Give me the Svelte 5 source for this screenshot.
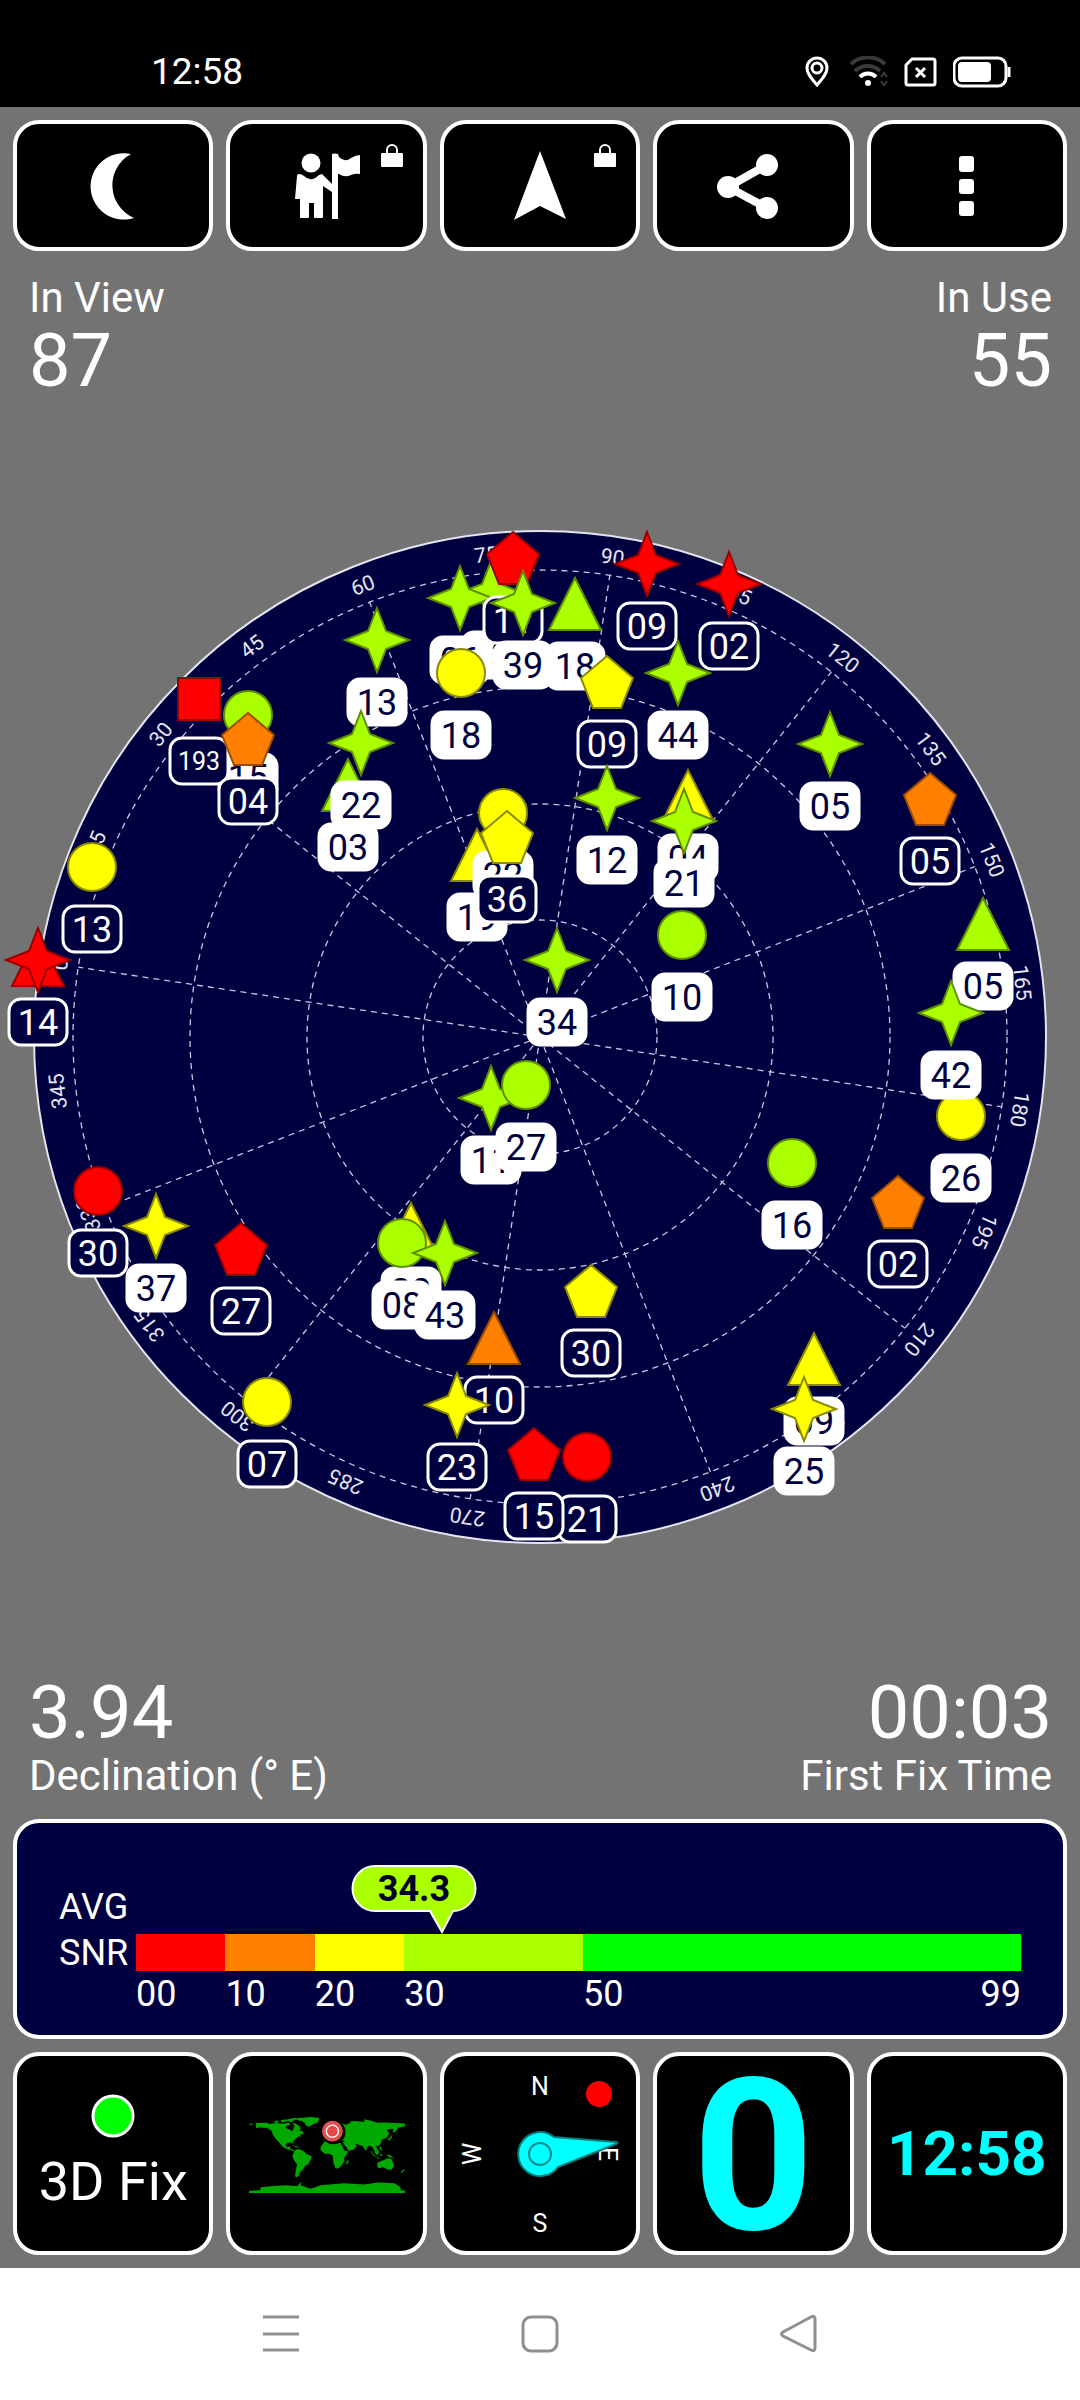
<script>
  const palette = {
    g: ['#aaff00', '#5f8f00'],
    y: ['#ffff00', '#8a8a00'],
    o: ['#ff8000', '#9a4d00'],
    r: ['#ff0000', '#990000']
  };

  const cx = 540;
  const cy = 1036;
  const dialRadius = 506;
  const horizonRadius = 467;
  const heading = 81.4;

  const rings = [117, 233, 350, horizonRadius];
  const spokes = Array.from({ length: 12 }, (_, i) => i * 30 - heading);
  const bearings = Array.from({ length: 24 }, (_, i) => i * 15);

  // kind, colour, x, y, id, used in the fix; later entries are drawn on top
  const satellites = [
    ['triangle', 'r', 38, 959, '', false],
    ['star', 'r', 38, 959, '14', false],
    ['circle', 'y', 92, 866, '13', false],
    ['circle', 'g', 248, 714, '15', true],
    ['square', 'r', 199, 698, '193', false],
    ['pentagon', 'o', 248, 738, '04', false],
    ['star', 'g', 377, 639, '13', true],
    ['triangle', 'g', 348, 784, '03', true],
    ['star', 'g', 361, 742, '22', true],
    ['star', 'g', 491, 592, '23', true],
    ['star', 'g', 460, 597, '06', true],
    ['pentagon', 'r', 513, 557, '11', false],
    ['star', 'g', 523, 602, '39', true],
    ['circle', 'y', 461, 672, '18', true],
    ['triangle', 'g', 575, 603, '18', true],
    ['pentagon', 'y', 607, 681, '09', false],
    ['star', 'r', 647, 563, '09', false],
    ['star', 'r', 729, 583, '02', false],
    ['star', 'g', 678, 672, '44', true],
    ['star', 'g', 607, 797, '12', true],
    ['triangle', 'y', 688, 795, '04', true],
    ['star', 'g', 684, 820, '21', true],
    ['star', 'g', 830, 743, '05', true],
    ['pentagon', 'o', 930, 798, '05', false],
    ['triangle', 'y', 477, 854, '19', true],
    ['circle', 'y', 503, 812, '22', true],
    ['pentagon', 'y', 507, 836, '36', false],
    ['circle', 'g', 682, 934, '10', true],
    ['star', 'g', 557, 959, '34', true],
    ['triangle', 'g', 983, 923, '05', true],
    ['circle', 'y', 961, 1115, '26', true],
    ['star', 'g', 951, 1012, '42', true],
    ['star', 'g', 491, 1097, '11', true],
    ['circle', 'g', 526, 1084, '27', true],
    ['circle', 'g', 792, 1162, '16', true],
    ['pentagon', 'o', 898, 1201, '02', false],
    ['circle', 'r', 98, 1190, '30', false],
    ['star', 'y', 156, 1225, '37', true],
    ['pentagon', 'r', 241, 1248, '27', false],
    ['triangle', 'y', 411, 1228, '20', true],
    ['circle', 'g', 402, 1242, '08', true],
    ['star', 'g', 445, 1252, '43', true],
    ['pentagon', 'y', 591, 1290, '30', false],
    ['triangle', 'o', 494, 1337, '10', false],
    ['star', 'y', 457, 1404, '23', false],
    ['circle', 'y', 267, 1401, '07', false],
    ['circle', 'r', 587, 1456, '21', false],
    ['pentagon', 'r', 534, 1453, '15', false],
    ['triangle', 'y', 814, 1358, '09', true],
    ['star', 'y', 804, 1408, '25', true]
  ].map(([kind, colour, x, y, id, used]) => ({ kind, colour, x, y, id, used }));

  const outlines = {
    star: '0,-32 9,-9 32,0 9,9 0,32 -9,9 -32,0 -9,-9',
    triangle: '0,-26 26,26 -26,26',
    pentagon: '0,-26 26,-4 14,26 -14,26 -26,-4',
    square: '-21,-21 21,-21 21,21 -21,21'
  };

  const segments = [
    { from: '00', share: 10, tone: 'red' },
    { from: '10', share: 10, tone: 'orange' },
    { from: '20', share: 10, tone: 'yellow' },
    { from: '30', share: 20, tone: 'lime' },
    { from: '50', share: 49, tone: 'green', to: '99' }
  ];
  const average = 34.3;
</script>

<header class="status">
  <span>12:58</span>
  <div class="status-icons">
    <svg width="24" height="32" viewBox="0 0 24 32" fill="none" stroke="#fff" stroke-width="3" aria-hidden="true">
      <path d="M12 29C7 23 2 18 2 12a10 10 0 0 1 20 0c0 6-5 11-10 17Z" />
      <circle cx="12" cy="12" r="5" />
    </svg>
    <svg width="43" height="32" viewBox="0 0 43 32" fill="none" stroke-width="4" aria-hidden="true">
      <path d="M6 8a25 25 0 0 1 34 0" stroke="#3a3a3a" />
      <path d="M10 15a18 18 0 0 1 25 0" stroke="#3a3a3a" />
      <path d="M15 21a11 11 0 0 1 16 0" stroke="#fff" />
      <circle cx="23" cy="27" r="3" fill="#fff" />
      <path d="M36 21l3-4 3 4M36 25l3 4 3-4" stroke="#3a3a3a" stroke-width="2" />
    </svg>
    <svg width="33" height="32" viewBox="0 0 33 32" fill="none" stroke="#fff" stroke-width="3" aria-hidden="true">
      <path d="M8 3h21q2 0 2 2v22q0 2-2 2H4q-2 0-2-2V9Z" stroke-linejoin="round" />
      <path d="M12 12l9 9M21 12l-9 9" />
    </svg>
    <svg width="58" height="32" viewBox="0 0 58 32" fill="none" aria-hidden="true">
      <rect x="1" y="2" width="52" height="28" rx="8" stroke="#fff" stroke-width="3" />
      <rect x="5" y="6" width="33" height="20" rx="4" fill="#fff" />
      <path d="M56 11v10" stroke="#fff" stroke-width="3" />
    </svg>
  </div>
</header>

<main>
  <nav class="tiles toolbar" aria-label="Tools">
    <button class="tile" aria-label="Night mode">
      <svg width="72" height="72" viewBox="0 0 72 72" fill="#fff"><path d="M54 4A33.2 33.2 0 1 0 57 68A35.6 35.6 0 0 1 54 4Z" /></svg>
    </button>
    <button class="tile" aria-label="Waypoints">
      <svg width="72" height="72" viewBox="0 0 72 72" fill="#fff">
        <circle cx="20" cy="13" r="9.5" />
        <path d="M8 24q3 0 5 2q7 7 15-1l3-1 10 10v8l-9-6V67q0 1-1 1h-7q-1 0-1-1V53h-5V67q0 1-1 1h-7q-1 0-1-1V49H4L6 26q0-2 2-2Z" />
        <path d="M41 4q3-1 6 0l1 3q6 6 12 1 5-3 9-3v19q-4-1-9 1-6 3-12-1l-1 0V69h-6Z" />
      </svg>
      {@render lock()}
    </button>
    <button class="tile" aria-label="Navigate">
      <svg width="72" height="72" viewBox="0 0 72 72" fill="#fff"><path d="M36 1 62 69 36 56 10 70Z" /></svg>
      {@render lock()}
    </button>
    <button class="tile" aria-label="Share">
      <svg width="72" height="72" viewBox="0 0 72 72" fill="#fff">
        <path d="M50 15 11 37 50 58" fill="none" stroke="#fff" stroke-width="8" />
        <circle cx="11" cy="37" r="11" /><circle cx="50" cy="15" r="11" /><circle cx="50" cy="58" r="11" />
      </svg>
    </button>
    <button class="tile" aria-label="More">
      <svg width="72" height="72" viewBox="0 0 72 72" fill="#fff">
        <rect x="28" y="6" width="15" height="16" rx="3" /><rect x="28" y="29" width="15" height="15" rx="3" /><rect x="28" y="51" width="15" height="15" rx="3" />
      </svg>
    </button>
  </nav>

  <section class="stats">
    <div><div class="name">In View</div><div class="value">87</div></div>
    <div class="end"><div class="name">In Use</div><div class="value">55</div></div>
  </section>

  <svg class="sky" viewBox="0 398 1080 1276" role="img" aria-label="Satellite positions">
    <circle {cx} {cy} r={dialRadius} fill="#000040" stroke="#e4e4f0" stroke-width="2" />
    <g class="grid">
      {#each rings as r}
        <circle {cx} {cy} {r} />
      {/each}
      {#each spokes as angle}
        <path d="M{cx} {cy}V{cy - horizonRadius}" transform="rotate({angle} {cx} {cy})" />
      {/each}
    </g>
    {#each bearings as bearing}
      <text class="bearing" x={cx} y={cy - 478} transform="rotate({bearing - heading} {cx} {cy})">{bearing}</text>
    {/each}
    {#each satellites as s}
      <g transform="translate({s.x} {s.y})">
        {#if s.kind === 'circle'}
          <circle r="24" fill={palette[s.colour][0]} stroke={palette[s.colour][1]} stroke-width="2" />
        {:else}
          <polygon points={outlines[s.kind]} fill={palette[s.colour][0]} stroke={palette[s.colour][1]} stroke-width="2" />
        {/if}
        {#if s.id}
          <rect class="plate" class:used={s.used} x="-29" y="39" width="58" height="46" rx="12" />
          <text class="id" class:used={s.used} class:small={s.id.length > 2} y={s.id.length > 2 ? 71 : 75}>{s.id}</text>
        {/if}
      </g>
    {/each}
  </svg>

  <section class="stats">
    <div><div class="value">3.94</div><div class="name">Declination (° E)</div></div>
    <div class="end"><div class="value">00:03</div><div class="name">First Fix Time</div></div>
  </section>

  <section class="snr">
    <div class="snr-name">AVG<br />SNR</div>
    <div class="gauge">
      <svg class="bubble" style="left: {(average / 99) * 100}%" width="126" height="69" viewBox="0 0 126 69">
        <path d="M24 1H102A22 22 0 0 1 102 46L91 67 79 46H24A22 22 0 0 1 24 1Z" fill="#aaff00" stroke="#fff" stroke-width="2" />
        <text x="63" y="36">{average}</text>
      </svg>
      {#each segments as s}
        <div class="segment" style="flex-grow: {s.share}">
          <div class="band {s.tone}"></div>
          <div class="ticks"><span>{s.from}</span>{#if s.to}<span>{s.to}</span>{/if}</div>
        </div>
      {/each}
    </div>
  </section>

  <section class="tiles gadgets">
    <button class="tile fix">
      <svg width="44" height="44" viewBox="0 0 44 44"><circle cx="22" cy="22" r="20" fill="#0f0" stroke="#fff" stroke-width="3" /></svg>
      <span>3D Fix</span>
    </button>
    <button class="tile" aria-label="World map">
      <svg width="156" height="78" viewBox="57 75 464 232" fill="#00a800">
        <path d="M57 101h12v3H57ZM78 99 110 98 118 102 140 99 160 101 176 98 180 104 168 108 166 114 178 118 184 124 190 118 188 110 194 112 190 104 186 99 196 100 206 108 210 116 206 120 214 122 220 130 208 134 212 138 202 140 194 148 188 154 188 162 184 157 170 158 166 164 170 172 178 168 180 176 190 180 194 184 186 182 170 176 158 170 148 158 136 146 128 134 124 122 112 114 90 112 78 114Z" />
        <path d="M130 94l10-3 8 4-12 4ZM150 91l16-3 6 5-16 4ZM168 89 190 84 204 83 192 90 182 97ZM184 164l16 4 8 5-12-3ZM204 84 240 81 266 84 262 98 248 102 236 110 228 108 222 98 212 92 196 90Z" />
        <path d="M192 182 200 176 212 178 222 184 226 190 244 198 240 208 234 220 224 226 218 236 208 246 206 254 200 260 194 258 196 240 200 222 190 208 186 198Z" />
        <path d="M282 154 300 150 308 156 330 158 336 172 342 182 352 182 346 194 340 202 340 212 332 226 322 234 314 234 308 216 306 196 296 190 282 190 270 180 270 170ZM346 216 354 206 352 218 346 222Z" />
        <path d="M278 150 280 140 292 138 300 128 292 120 310 104 330 98 344 104 360 98 356 94 374 93 400 96 400 88 420 92 440 98 460 97 520 100 522 108 500 113 494 124 484 127 486 116 466 119 474 130 464 144 452 148 448 162 440 168 434 166 440 180 432 184 424 170 414 166 408 172 404 182 396 168 386 164 372 160 378 168 366 178 354 182 344 168 336 156 342 152 330 150 322 150 318 142 300 144 292 150ZM470 148 478 140 484 132 480 146 470 152Z" />
        <path d="M414 178l8 8 12 13-6-2ZM430 184l12-6 2 10-8 6ZM430 199l16 4-2 3ZM448 188l7 8-7 1ZM464 193l14 2 10 9-14-4ZM446 166l6 10-1 7-5-8Z" />
        <path d="M438 224 440 216 454 210 464 206 474 204 480 206 486 218 488 228 480 238 466 236 456 230 442 234ZM521 235l-4 7-9 6 2-6Z" />
        <path d="M57 300 90 299 92 290 130 286 170 284 200 287 214 272 210 284 240 294 270 284 340 278 400 282 440 276 490 278 508 290 508 298 521 300 521 307 57 307Z" />
        <circle cx="308" cy="126" r="36" fill="#000" />
        <circle cx="305" cy="123" r="31" fill="#e05050" />
        <circle cx="305" cy="123" r="18" fill="#e84848" stroke="#fff" stroke-width="4" />
      </svg>
    </button>
    <button class="tile" aria-label="Compass">
      <svg class="compass" width="192" height="194" viewBox="-96 -97 192 194">
        <text y="-59">N</text>
        <text y="78">S</text>
        <text y="-59" transform="rotate(-90)">W</text>
        <text y="-59" transform="rotate(90)">E</text>
        <circle cx="59" cy="-60" r="13" fill="#f00" />
        <path d="M14-17 76-12Q79-11 76-10L18 13A22 22 0 1 1 14-17Z" fill="#0ff" stroke="#007c7c" stroke-width="2" />
        <circle r="11" fill="none" stroke="#008c8c" stroke-width="2" />
      </svg>
    </button>
    <button class="tile speed">0</button>
    <button class="tile clock">12:58</button>
  </section>
</main>

<nav class="system" aria-label="System">
  <button aria-label="Recent apps">
    <svg width="42" height="42" viewBox="0 0 42 42"><path d="M3 4h36M3 21h36M3 37h36" /></svg>
  </button>
  <button aria-label="Home">
    <svg width="42" height="42" viewBox="0 0 42 42"><rect x="4" y="4" width="34" height="34" rx="8" /></svg>
  </button>
  <button aria-label="Back">
    <svg width="42" height="42" viewBox="0 0 42 42"><path d="M33 4Q37 2 37 6V35Q37 39 33 37L5 23Q2 21 5 19Z" /></svg>
  </button>
</nav>

{#snippet lock()}
  <svg class="lock" width="22" height="24" viewBox="0 0 22 24" aria-hidden="true">
    <path d="M6 11V7a5 5 0 0 1 10 0v4" fill="none" stroke="#fff" stroke-width="2" />
    <rect y="10" width="22" height="14" rx="1" fill="#fff" />
  </svg>
{/snippet}

<style>
  :global(body) {
    margin: 0;
    background: #fff;
    color: #fff;
    font-family: Roboto, "Liberation Sans", sans-serif;
  }
  button {
    margin: 0;
    padding: 0;
    border: 0;
    background: none;
    color: inherit;
    font: inherit;
  }
  .status {
    box-sizing: border-box;
    height: 107px;
    padding: 37px 69px 0 151px;
    background: #000;
    display: flex;
    align-items: center;
    justify-content: space-between;
    font-size: 37px;
    line-height: 48px;
  }
  .status-icons {
    display: flex;
    gap: 16px;
  }
  main {
    padding: 13px 0;
    background: #737373;
  }
  .tiles {
    display: grid;
    grid-template-columns: repeat(5, 1fr);
    gap: 13px;
    margin: 0 13px;
  }
  .tile {
    position: relative;
    box-sizing: border-box;
    border: 4px solid #fff;
    border-radius: 26px;
    background: #000;
    display: flex;
    align-items: center;
    justify-content: center;
    min-width: 0;
  }
  .toolbar .tile {
    height: 131px;
  }
  .gadgets .tile {
    height: 203px;
  }
  .lock {
    position: absolute;
    top: 19px;
    right: 20px;
  }
  .stats {
    display: flex;
    justify-content: space-between;
    padding: 0 28px 0 29px;
  }
  .toolbar + .stats {
    padding-top: 22px;
  }
  .end {
    text-align: right;
  }
  .name {
    font-size: 42px;
    line-height: 50px;
  }
  .value {
    font-size: 74px;
    line-height: 76px;
  }
  .sky {
    display: block;
    width: 100%;
    height: auto;
  }
  .grid {
    fill: none;
    stroke: #c8c8e0;
    stroke-width: 1.3;
    stroke-dasharray: 6 5;
  }
  .bearing {
    fill: #e6e6f2;
    font-size: 21px;
    text-anchor: middle;
  }
  .plate {
    fill: #000040;
    stroke: #fff;
    stroke-width: 3;
  }
  .plate.used {
    fill: #fff;
  }
  .id {
    fill: #fff;
    font-size: 36px;
    text-anchor: middle;
  }
  .id.used {
    fill: #000040;
  }
  .id.small {
    font-size: 25px;
  }
  .snr {
    box-sizing: border-box;
    min-height: 220px;
    margin: 18px 13px 13px;
    padding: 61px 42px 0;
    border: 4px solid #fff;
    border-radius: 26px;
    background: #000040;
    display: flex;
    font-size: 36px;
  }
  .snr-name {
    width: 77px;
    line-height: 46px;
  }
  .gauge {
    position: relative;
    flex: 1;
    display: flex;
    margin-top: 50px;
  }
  .bubble {
    position: absolute;
    top: -69px;
    margin-left: -92px;
  }
  .bubble text {
    fill: #000020;
    font-size: 36px;
    font-weight: 700;
    text-anchor: middle;
  }
  .segment {
    flex-basis: 0;
    min-width: 0;
  }
  .band {
    height: 37px;
  }
  .red { background: #ff0000; }
  .orange { background: #ff8000; }
  .yellow { background: #ffff00; }
  .lime { background: #aaff00; }
  .green { background: #00ff00; }
  .ticks {
    display: flex;
    justify-content: space-between;
    margin-top: 3px;
    line-height: 40px;
  }
  .fix {
    flex-direction: column;
    gap: 12px;
    font-size: 54px;
    line-height: 64px;
  }
  .compass text {
    fill: #fff;
    font-size: 25px;
    text-anchor: middle;
  }
  .speed,
  .clock {
    color: #0ff;
    font-weight: 700;
    line-height: 1;
  }
  .speed {
    padding-top: 6px;
    font-size: 212px;
  }
  .clock {
    font-size: 62px;
  }
  .system {
    display: grid;
    grid-template-columns: repeat(3, 1fr);
    padding: 0 14%;
    background: #fff;
  }
  .system button {
    height: 132px;
    display: flex;
    align-items: center;
    justify-content: center;
  }
  .system svg {
    fill: none;
    stroke: #8f8f8f;
    stroke-width: 3;
  }
</style>
